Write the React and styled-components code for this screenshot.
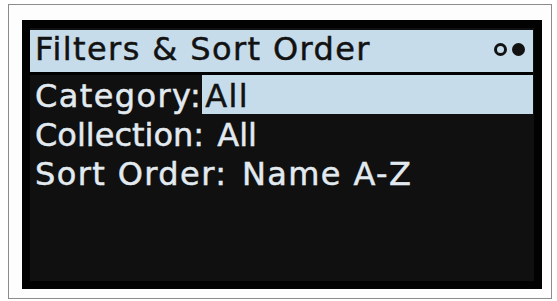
import React from 'react';
import styled, { createGlobalStyle } from 'styled-components';

const GlobalStyle = createGlobalStyle`
  html, body {
    margin: 0;
    padding: 0;
    background: #ffffff;
  }
`;

const Frame = styled.div`
  box-sizing: border-box;
  width: 544px;
  height: 295px;
  margin: 4px 0 0 8px;
  border: 1px solid #8c8c8c;
  padding: 15px 9px 0 13px;
  background: #fdfdfd;
`;

const Screen = styled.div`
  box-sizing: border-box;
  width: 520px;
  height: 269px;
  border: 8px solid #020202;
  padding: 2px 1px 0 0;
  background: #101010;
  display: flex;
  flex-direction: column;
  font-family: 'DejaVu Sans', 'Liberation Sans', sans-serif;
  font-size: 32px;
  letter-spacing: 1.4px;
  -webkit-text-stroke: 0.5px currentColor;
`;

const Header = styled.div`
  height: 42px;
  box-sizing: border-box;
  display: flex;
  align-items: flex-start;
  justify-content: space-between;
  padding: 0 8px 0 5px;
  background: #c7dcea;
  color: #121212;
  line-height: 38px;
`;

const Dots = styled.div`
  display: flex;
  gap: 5px;
  margin-top: 13px;
`;

const Dot = styled.span`
  box-sizing: border-box;
  width: 13px;
  height: 13px;
  border-radius: 50%;
  border: 3px solid #121212;
  background: ${p => (p.filled ? '#121212' : 'transparent')};
`;

const Separator = styled.div`
  height: 3px;
  background: #000;
`;

const Row = styled.div`
  display: flex;
  height: 39px;
  box-sizing: border-box;
  padding: 4px 0 0 5px;
  line-height: 35px;
  color: #e2eaf0;
  white-space: pre;
  letter-spacing: ${p => p.spacing || '1.4px'};
`;

const Value = styled.span`
  flex: 1;
  margin-top: -4px;
  padding: 4px 0 0 3px;
  background: ${p => (p.selected ? '#c7dcea' : 'transparent')};
  color: ${p => (p.selected ? '#121212' : 'inherit')};
`;

const rows = [
  { label: 'Category:', value: 'All', selected: true },
  { label: 'Collection: ', value: 'All', spacing: '0px' },
  { label: 'Sort Order: ', value: 'Name A-Z' },
];

export default function App() {
  return (
    <>
      <GlobalStyle />
      <Frame>
        <Screen>
          <Header>
            <span>Filters &amp; Sort Order</span>
            <Dots>
              <Dot />
              <Dot filled />
            </Dots>
          </Header>
          <Separator />
          {rows.map(r => (
            <Row key={r.label} spacing={r.spacing}>
              <span>{r.label}</span>
              <Value selected={r.selected}>{r.value}</Value>
            </Row>
          ))}
        </Screen>
      </Frame>
    </>
  );
}
